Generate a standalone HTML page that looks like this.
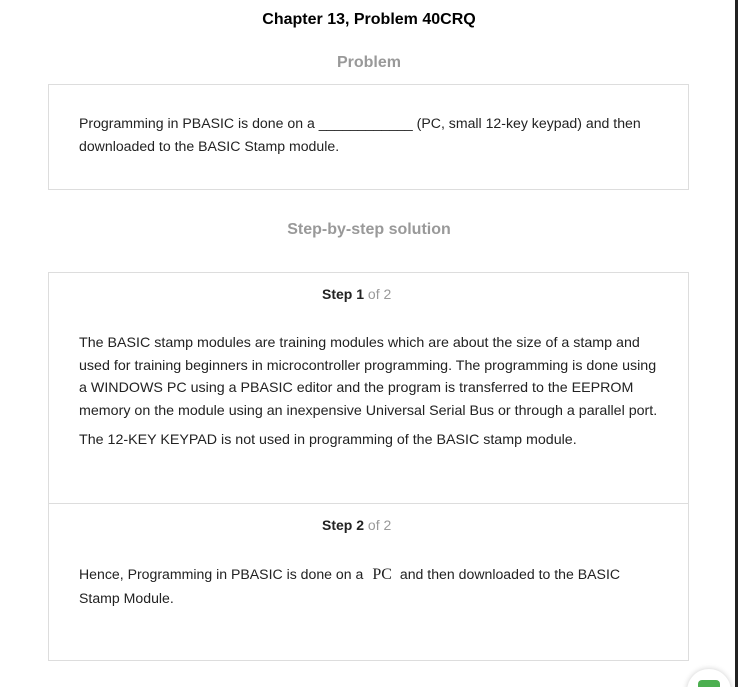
<!DOCTYPE html>
<html style="overflow:hidden;height:687px"><head><style>
body{margin:0;width:738px;height:687px;background:#fff;font-family:"Liberation Sans",sans-serif;position:relative;overflow:hidden;color:#222}
.a{position:absolute;white-space:nowrap}
.box{position:absolute;border:1px solid #ddd;box-sizing:border-box}
p{position:absolute;margin:0;font-size:14.25px;line-height:22.5px;white-space:nowrap}
</style></head><body>
<div class="a" style="left:0;width:738px;top:11px;text-align:center;font-size:16px;font-weight:bold;color:#000">Chapter 13, Problem 40CRQ</div>
<div class="a" style="left:0;width:738px;top:54px;text-align:center;font-size:16px;font-weight:bold;color:#999">Problem</div>
<div class="box" style="left:48px;top:84px;width:641px;height:106px"></div>
<p style="left:79px;top:112px;font-size:14.1px">Programming in PBASIC is done on a ____________ (PC, small 12-key keypad) and then<br>downloaded to the BASIC Stamp module.</p>
<div class="a" style="left:0;width:738px;top:221px;text-align:center;font-size:16px;font-weight:bold;color:#999">Step-by-step solution</div>
<div class="box" style="left:48px;top:272px;width:641px;height:389px"></div>
<div style="position:absolute;left:49px;top:503px;width:639px;height:1px;background:#ddd"></div>
<div class="a" style="left:322px;top:286px;font-size:14px"><b>Step 1</b> <span style="color:#999">of 2</span></div>
<p style="left:79px;top:332px">The BASIC stamp modules are training modules which are about the size of a stamp and<br>used for training beginners in microcontroller programming. The programming is done using<br>a WINDOWS PC using a PBASIC editor and the program is transferred to the EEPROM<br>memory on the module using an inexpensive Universal Serial Bus or through a parallel port.</p>
<p style="left:79px;top:429px">The 12-KEY KEYPAD is not used in programming of the BASIC stamp module.</p>
<div class="a" style="left:322px;top:517px;font-size:14px"><b>Step 2</b> <span style="color:#999">of 2</span></div>
<p style="left:79px;top:563px;font-size:14.1px">Hence, Programming in PBASIC is done on a<span style="font-family:'Liberation Serif',serif;font-size:16px;margin:0 4px 0 9px">PC</span> and then downloaded to the BASIC<br>Stamp Module.</p>
<div style="position:absolute;left:735px;top:0;width:3px;height:687px;background:#222"></div>
<div style="position:absolute;left:687px;top:669px;width:44px;height:44px;border-radius:50%;background:#fff;box-shadow:0 0 6px rgba(0,0,0,.2)"></div>
<div style="position:absolute;left:698px;top:680px;width:22px;height:12px;border-radius:4px 4px 0 0;background:#4caf50"></div>
</body></html>
